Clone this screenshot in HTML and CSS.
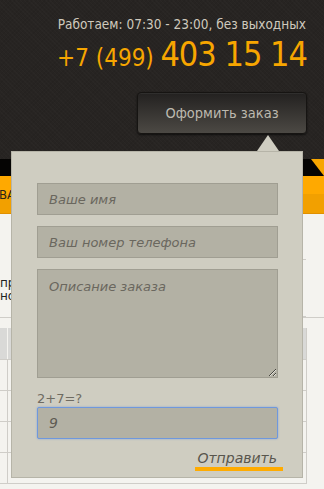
FILE: index.html
```
<!DOCTYPE html>
<html lang="ru">
<head>
<meta charset="utf-8">
<title>Оформить заказ</title>
<link rel="stylesheet" href="styles.css">
</head>
<body>
<header class="top">
  <div class="contacts">
    <div class="hours">Работаем: 07:30 - 23:00, без выходных</div>
    <div class="phone"><span class="code">+7 (499)</span> <span class="num">403 15 14</span></div>
    <button class="order-btn">Оформить заказ</button>
  </div>
</header>
<div class="stripe"><span class="corner"></span></div>
<nav class="menu"><span class="menu-item">ВАКАНСИИ</span></nav>
<main class="content">
  <div class="ticks"></div>
  <p class="text">при заказе<br>новым клиентам</p>
  <div class="grid">
    <div class="row head"><div class="c1"></div><div class="c2"></div></div>
    <div class="row"><div class="c1"></div><div class="c2"></div></div>
    <div class="row"><div class="c1"></div><div class="c2"></div></div>
    <div class="row"><div class="c1"></div><div class="c2"></div></div>
    <div class="row"><div class="c1"></div><div class="c2"></div></div>
  </div>
</main>

<form class="popup">
  <span class="arrow"></span>
  <input class="field" type="text" placeholder="Ваше имя">
  <input class="field" type="text" placeholder="Ваш номер телефона">
  <textarea class="field area" placeholder="Описание заказа"></textarea>
  <label class="captcha-label">2+7=?</label>
  <input class="field focus" type="text" value="9">
  <div class="send-row"><a class="send" href="#">Отправить</a></div>
</form>
</body>
</html>
```
FILE: styles.css
```
* { box-sizing: border-box; }
html, body { margin: 0; padding: 0; }
body {
  background: #f4f3ef;
  font-family: "DejaVu Sans", sans-serif;
  width: 324px;
  overflow: hidden;
}
.top {
  height: 159px;
  background-color: #272422;
  background-image:
    repeating-linear-gradient(45deg, rgba(255,255,255,0.015) 0 1px, transparent 1px 3px),
    repeating-linear-gradient(-45deg, rgba(0,0,0,0.05) 0 1px, transparent 1px 3px);
  display: flex;
  justify-content: flex-end;
}
.contacts {
  padding: 15px 18px 0 0;
  display: flex;
  flex-direction: column;
  align-items: flex-end;
}
.hours {
  font-family: "DejaVu Sans Condensed", "DejaVu Sans", sans-serif;
  font-stretch: condensed;
  font-size: 13.5px;
  color: #cfc9bd;
  line-height: 18px;
}
.phone {
  font-family: "DejaVu Sans Condensed", "DejaVu Sans", sans-serif;
  font-stretch: condensed;
  color: #f7a600;
  line-height: 38px;
  margin-top: 2px;
  white-space: nowrap;
}
.code { font-size: 24px; margin-right: 2px; }
.num { font-size: 34px; letter-spacing: -1px; margin-right: -1px; }
.order-btn {
  margin-top: 12px;
  margin-right: -1px;
  width: 170px;
  height: 42px;
  border: 1px solid #161412;
  border-radius: 4px;
  background: linear-gradient(#232120, #4c4944);
  box-shadow: 0 1px 2px rgba(0,0,0,0.6), inset 0 1px 0 rgba(255,255,255,0.06);
  color: #bdb9af;
  font-family: "DejaVu Sans Condensed", "DejaVu Sans", sans-serif;
  font-stretch: condensed;
  font-size: 14.5px;
  padding: 0;
}
.stripe {
  height: 17px;
  background: #050403;
  position: relative;
  overflow: hidden;
}
.corner {
  position: absolute;
  right: 0;
  top: 0;
  width: 0;
  height: 0;
  border-top: 17px solid #f7a600;
  border-left: 13px solid transparent;
}
.menu {
  height: 38px;
  background: linear-gradient(#ffa900 0 50%, #f2a000 50% 100%);
  border-bottom: 1px solid #e09000;
  display: flex;
  align-items: center;
}
.menu-item {
  font-family: "DejaVu Sans Condensed", "DejaVu Sans", sans-serif;
  font-stretch: condensed;
  font-size: 13px;
  color: #2a2418;
  margin-left: -1px;
}
.content {
  position: relative;
}
.ticks {
  position: absolute;
  right: 18px;
  top: 45px;
  width: 3px;
  height: 58px;
  border-top: 1px solid #cfcdc8;
  border-bottom: 1px solid #cfcdc8;
}
.text {
  margin: 0;
  padding: 63px 0 0 0;
  font-family: "DejaVu Sans", sans-serif;
  font-size: 12px;
  line-height: 13px;
  color: #222;
  height: 104px;
  border-bottom: 1px solid #cfcdc8;
  white-space: nowrap;
}
.grid {
  margin-top: 10px;
  border-right: 1px solid #cfcdc8;
  width: 307px;
}
.row {
  display: flex;
  height: 31px;
  border-bottom: 1px solid #cfcdc8;
}
.row.head { height: 32px; background: #d9d9d7; }
.row .c1 { width: 8px; border-right: 1px solid #f4f3ef; }
.row .c2 { flex: 1; }
.row:not(.head) .c1 { border-right: 1px solid #cfcdc8; }

.popup {
  position: absolute;
  left: 11px;
  top: 151px;
  width: 292px;
  height: 327px;
  background: #cfcdc1;
  border: 1px solid #b6b4a8;
  padding: 31px 24px 0 25px;
  display: flex;
  flex-direction: column;
  margin: 0;
}
.arrow {
  position: absolute;
  top: -17px;
  left: 245px;
  width: 0;
  height: 0;
  border-bottom: 16px solid #cfcdc1;
  border-left: 11px solid transparent;
  border-right: 11px solid transparent;
}
.field {
  display: block;
  width: 241px;
  height: 32px;
  margin: 0 0 11px 0;
  background: #b3b1a4;
  border: 1px solid #a09e92;
  padding: 0 11px;
  font-family: "DejaVu Sans", sans-serif;
  font-style: italic;
  font-size: 13px;
  color: #5d5a52;
  outline: none;
  border-radius: 0;
}
.field::placeholder { color: #6a675e; opacity: 1; }
.area {
  height: 109px;
  padding: 9px 11px;
  resize: both;
  margin-bottom: 14px;
}
.captcha-label {
  font-family: "DejaVu Sans", sans-serif;
  font-size: 13px;
  color: #6e6b62;
  line-height: 14px;
  margin-bottom: 1px;
}
.popup .field.focus {
  border: 1px solid #6f98dd;
  border-radius: 2px;
  box-shadow: 0 0 2px rgba(111,152,221,0.8);
  font-size: 14px;
  color: #5d5a52;
  margin-bottom: 11px;
}
.send-row {
  display: flex;
  justify-content: flex-end;
  margin-right: -5px;
}
.send {
  font-family: "DejaVu Sans", sans-serif;
  font-style: italic;
  font-size: 14px;
  color: #58554d;
  text-decoration: none;
  line-height: 17px;
  padding: 0 6px 0 2px;
  border-bottom: 4px solid #ffab00;
}
```
